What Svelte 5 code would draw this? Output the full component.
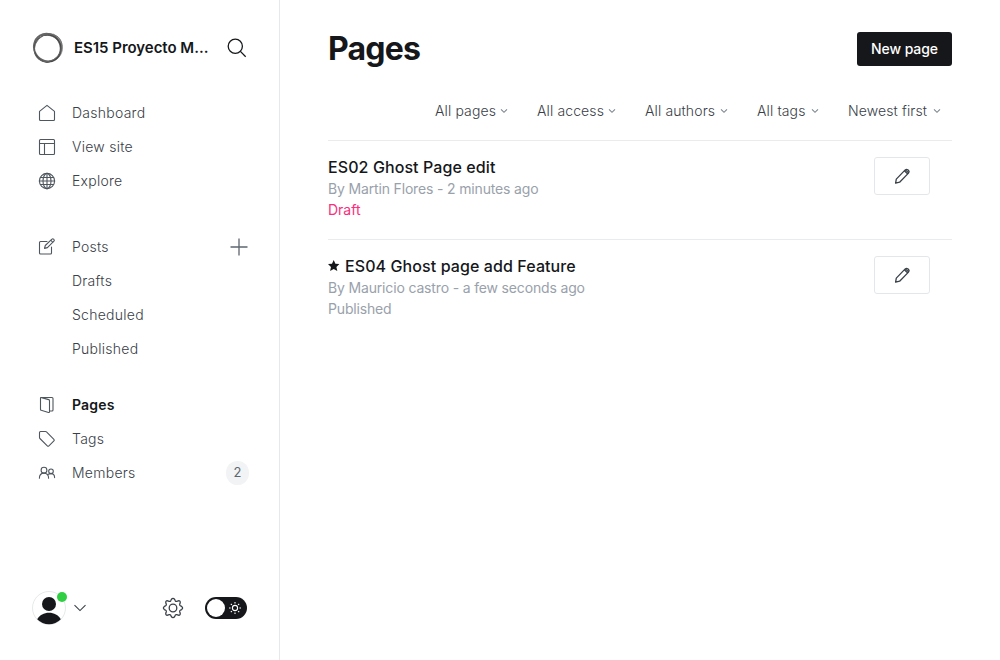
<script>
  const groups = [
    [
      { label: 'Dashboard', icon: 'home' },
      { label: 'View site', icon: 'layout' },
      { label: 'Explore', icon: 'globe' }
    ],
    [
      { label: 'Posts', icon: 'compose', add: true },
      { label: 'Drafts' },
      { label: 'Scheduled' },
      { label: 'Published' }
    ],
    [
      { label: 'Pages', icon: 'page', active: true },
      { label: 'Tags', icon: 'tag' },
      { label: 'Members', icon: 'members', count: 2 }
    ]
  ];
  const filters = [
    { label: 'All pages', width: 73 },
    { label: 'All access', width: 79 },
    { label: 'All authors', width: 83 },
    { label: 'All tags', width: 62 },
    { label: 'Newest first', width: 93 }
  ];
  const pages = [
    { title: 'ES02 Ghost Page edit', meta: 'By Martin Flores - 2 minutes ago', status: 'Draft' },
    { title: 'ES04 Ghost page add Feature', meta: 'By Mauricio castro - a few seconds ago', status: 'Published', featured: true }
  ];
</script>

{#snippet icon(name)}
  <svg class="icon" width="18" height="18" viewBox="0 0 18 18">
    {#if name === 'home'}
      <path d="M1.500 7.400 9 1.400l7.500 6v8.100q0 1-1 1h-13q-1 0-1-1z" />
    {:else if name === 'layout'}
      <rect x="1.500" y="1.500" width="15" height="15" rx="1" /><path d="M1.500 5.500h15M6.500 5.500v11" />
    {:else if name === 'globe'}
      <circle cx="9" cy="9" r="7.600" /><ellipse cx="9" cy="9" rx="4" ry="7.600" /><path d="M9 1.300v15.400M1.300 9h15.400M2.400 5.500h13.200M2.400 12.500h13.200" />
    {:else if name === 'compose'}
      <path d="M9 3.500H2.500q-1 0-1 1v10.500q0 1 1 1h10q1 0 1-1V9M6.500 10.400l.8-2.900L13.900 1.200q.8-.8 1.700 0l.3.3q.8.900 0 1.700L9.400 9.600zM12.900 2.300l2 2" />
    {:else if name === 'page'}
      <path d="M3.200 1.500h10.800q1 0 1 1v11.500q0 1-1 1h-2M2.500 2.200v11.200q0 .7.700.9l7.300 2.200q1 .2 1-.8V4.700q0-.8-.8-1.100L3.600 1.600q-1.100-.3-1.100.6z" />
    {:else if name === 'tag'}
      <path d="M1.500 2.500q0-1 1-1h5q.6 0 1 .4l7.400 7.400q.8.800 0 1.600l-5 5q-.8.800-1.600 0L1.900 8.500q-.4-.4-.4-1z" />
    {:else if name === 'members'}
      <circle cx="6" cy="6.200" r="2.900" /><circle cx="13" cy="7.300" r="2.300" /><path d="M1.400 14.200c0-3.200 1.900-5.100 4.600-5.100s4.600 1.900 4.600 5.100M10.300 10.300c.8-.5 1.700-.7 2.700-.7 2.200 0 3.600 1.500 3.600 4" />
    {/if}
  </svg>
{/snippet}

<div class="app">
  <aside>
    <header class="brand">
      <svg class="logo" width="32" height="32" viewBox="0 0 32 32" fill="none">
        <path d="M9 3.800C17-.8 27 2.800 29.800 11.500c2.500 8-2.500 16.500-10.300 18.200 7-3.500 10.200-9.500 8.300-16.700C25.500 4.800 17 1.800 9 3.800z" fill="#aaa" stroke="#777" stroke-width=".8" />
        <ellipse cx="15.300" cy="16.300" rx="14.100" ry="13.200" stroke="#666" stroke-width="1.900" transform="rotate(58 16 16)" />
        <ellipse cx="15.700" cy="16.600" rx="13.300" ry="13.600" stroke="#444" stroke-width="1" transform="rotate(10 16 16)" />
        <ellipse cx="16.200" cy="15.900" rx="14.800" ry="12.800" stroke="#666" stroke-width=".8" transform="rotate(-48 16 16)" />
      </svg>
      <strong>ES15 Proyecto M...</strong>
      <svg class="search" width="20" height="20" viewBox="0 0 20 20"><circle cx="8.300" cy="8.300" r="7.100" /><path d="m13.400 13.400 5.300 5.300" /></svg>
    </header>
    <nav>
      {#each groups as group}
        <ul>
          {#each group as item}
            <li class:active={item.active}>
              <span class="slot">{#if item.icon}{@render icon(item.icon)}{/if}</span>
              <span class="label">{item.label}</span>
              {#if item.add}<svg class="plus" width="18" height="18" viewBox="0 0 18 18"><path d="M9 .5v17M.5 9h17" /></svg>{/if}
              {#if item.count}<span class="count">{item.count}</span>{/if}
            </li>
          {/each}
        </ul>
      {/each}
    </nav>
    <footer>
      <div class="avatar">
        <svg width="34" height="34" viewBox="0 0 34 34"><circle cx="17" cy="17" r="16.500" fill="#fff" stroke="#e6e8ea" /><circle cx="17" cy="13" r="7" fill="#15171a" /><path d="M5.200 28.300C7.600 24 12 21.800 17 21.800s9.400 2.200 11.800 6.500A16.400 16.400 0 0 1 5.200 28.300z" fill="#15171a" /></svg>
        <i></i>
      </div>
      <svg class="more" width="14" height="8" viewBox="0 0 14 8"><path d="m1.500 1.200 5.500 5.400 5.500-5.400" /></svg>
      <svg class="gear" width="22" height="22" viewBox="0 0 22 22"><circle cx="11" cy="11" r="3.800" /><path d="M9.300 2.500q1.700-2.200 3.400 0l.6 1.300q.5.800 1.500.5l1.400-.5q2.400-.3 2 2l-.5 1.400q-.3 1 .6 1.500l1.300.7q2 1.600 0 3.200l-1.300.7q-.9.500-.6 1.500l.5 1.400q.4 2.400-2 2l-1.400-.5q-1-.3-1.500.5l-.6 1.300q-1.700 2.200-3.400 0l-.6-1.300q-.5-.8-1.500-.5l-1.400.5q-2.400.4-2-2l.5-1.400q.3-1-.6-1.500l-1.300-.7q-2-1.600 0-3.200l1.300-.7q.9-.5.6-1.500l-.5-1.400q-.4-2.300 2-2l1.400.5q1 .3 1.500-.5z" /></svg>
      <div class="toggle">
        <b></b>
        <svg width="14" height="14" viewBox="0 0 14 14"><circle cx="7" cy="7" r="2.600" /><path d="M7 1v1.600M7 11.400V13M1 7h1.600M11.400 7H13M2.800 2.800l1.100 1.100M10.100 10.100l1.100 1.100M2.800 11.200l1.100-1.100M10.100 3.900l1.100-1.100" /></svg>
      </div>
    </footer>
  </aside>
  <main>
    <div class="top"><h1>Pages</h1><button class="new">New page</button></div>
    <div class="filters">
      {#each filters as f}
        <div style:width="{f.width}px"><span>{f.label}</span><svg width="8" height="6" viewBox="0 0 8 6"><path d="m1 1.300 3 3 3-3" /></svg></div>
      {/each}
    </div>
    {#each pages as p}
      <article>
        <div class="text">
          <h3>{#if p.featured}<svg class="star" width="12" height="12" viewBox="0 0 12 12"><path d="m5.700.1 1.700 3.600 4 .4-3 2.800.9 4.200L5.700 9.100l-3.600 2 .9-4.200L0 4.100l4-.4z" /></svg>{/if}<span>{p.title}</span></h3>
          <p>{p.meta}</p>
          <p class:draft={p.status === 'Draft'}>{p.status}</p>
        </div>
        <button class="edit" aria-label="Edit"><svg width="18" height="18" viewBox="0 0 18 18"><path d="m2.600 16.200.7-4.100L12.200 2.900q1.200-1.100 2.500-.2l.9.800q1.100 1.300-.1 2.600L6.600 15.200zM11.400 3.700l3.400 3.400M12.600 2.900l3 3" /></svg></button>
      </article>
    {/each}
  </main>
</div>

<style>
  :global(body) { background: #fff; }
  .app { display: flex; height: 660px; overflow: hidden; font-family: Inter, sans-serif; font-size: 14px; color: #394047; }
  svg { display: block; flex: none; fill: none; }
  aside { box-sizing: border-box; width: 280px; border-right: 1px solid #e6e9eb; padding: 32px 30px 35px 32px; display: flex; flex-direction: column; }
  .brand { display: flex; align-items: center; height: 32px; }
  .brand strong { width: 142px; margin-left: 10px; margin-right: 11px; padding-bottom: 1px; font-size: 15px; font-weight: 600; letter-spacing: -.03px; color: #15171a; white-space: nowrap; }
  .search { stroke: #15171a; stroke-width: 1.300; }
  nav { margin-top: 32px; }
  ul { list-style: none; margin: 0 0 32px; padding: 0; }
  ul:nth-child(2) { margin-bottom: 22px; }
  li { display: flex; align-items: center; height: 34px; }
  .slot { box-sizing: border-box; width: 40px; padding-left: 6px; }
  .icon { stroke: #4e565e; stroke-width: 1.100; stroke-linejoin: round; stroke-linecap: round; }
  .label { flex: 1; padding-bottom: 2px; font-weight: 300; letter-spacing: .26px; }
  .active { color: #15171a; }
  .active .label { font-weight: 600; letter-spacing: .2px; }
  .plus { margin-right: 1px; stroke: #5d666f; stroke-width: 1.300; }
  .count { width: 23px; height: 24px; line-height: 22px; border-radius: 12px; background: #f1f3f4; text-align: center; font-size: 13px; color: #5d666f; }
  footer { margin-top: auto; display: flex; align-items: center; height: 34px; }
  .avatar { position: relative; }
  .avatar i { position: absolute; right: -1px; top: 1px; width: 10px; height: 10px; border-radius: 50%; background: #30cf43; }
  .more { margin-left: 7px; stroke: #394047; stroke-width: 1.100; }
  .gear { margin-left: 75px; stroke: #394047; stroke-width: 1.300; }
  .toggle { box-sizing: border-box; margin-left: 21px; width: 42px; height: 22px; border-radius: 11px; background: #15171a; display: flex; align-items: center; gap: 3px; padding-left: 2px; flex: none; }
  .toggle b { width: 18px; height: 18px; border-radius: 50%; background: #fff; }
  .toggle svg { stroke: #fff; stroke-width: 1.100; }
  main { flex: 1; padding: 32px 48px; min-width: 0; }
  .top { display: flex; justify-content: space-between; height: 34px; align-items: center; }
  h1 { margin: 0; font-size: 32px; font-weight: 700; letter-spacing: -.8px; color: #15171a; line-height: 34px; }
  .new { border: 0; border-radius: 3px; background: #15171a; color: #fff; width: 95px; height: 34px; padding: 0 0 2px; font: 500 14px Inter, sans-serif; letter-spacing: -.1px; }
  .filters { display: flex; justify-content: flex-end; gap: 29px; padding: 34px 11px 0 0; height: 40px; border-bottom: 1px solid #e9ebed; line-height: 22px; font-weight: 300; letter-spacing: .12px; }
  .filters > div { display: flex; justify-content: space-between; align-items: center; height: 22px; white-space: nowrap; }
  .filters svg { stroke: #7c8690; stroke-width: 1.100; }
  article { display: flex; justify-content: space-between; padding: 16px 22px 0 0; height: 82px; border-bottom: 1px solid #e9ebed; }
  article:last-child { border: 0; }
  h3 { margin: 0; font-size: 16px; font-weight: 500; letter-spacing: .09px; line-height: 21px; color: #15171a; display: flex; align-items: center; gap: 5px; }
  .star { fill: #15171a; margin-bottom: 2px; }
  p { margin: 0; line-height: 21px; letter-spacing: -.16px; color: #99a1ab; }
  .draft { color: #fb2d7c; letter-spacing: 0; }
  .edit { display: grid; place-items: center; box-sizing: border-box; width: 56px; height: 38px; background: #fff; border: 1px solid #e4e7e9; border-radius: 3px; padding: 0; }
  .edit svg { stroke: #394047; stroke-width: 1.300; stroke-linejoin: round; }
</style>
